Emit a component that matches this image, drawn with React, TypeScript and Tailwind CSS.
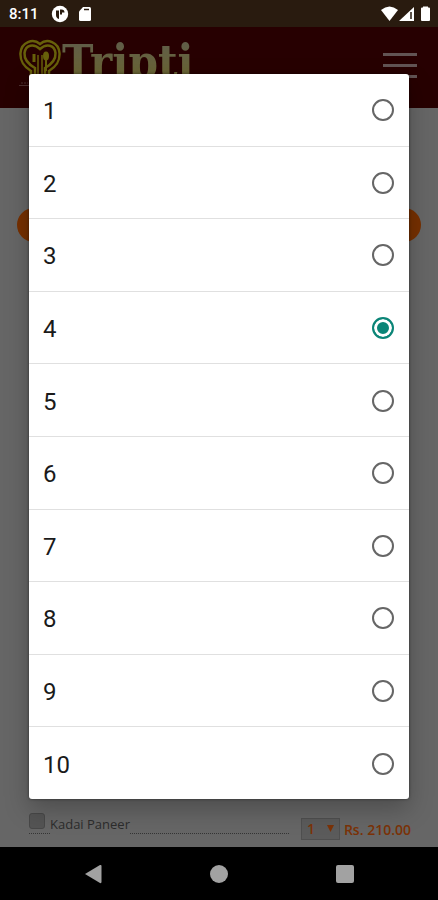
import React, { useState } from 'react';

const QUANTITIES = [1, 2, 3, 4, 5, 6, 7, 8, 9, 10];

const StatusBar: React.FC = () => (
  <div className="h-[27px] bg-[#291b0f] flex items-center justify-between pl-[9px] pr-[7px] text-white">
    <div className="flex items-center gap-3">
      <span className="text-[15px] leading-5 font-medium">8:11</span>
      <div className="flex items-center gap-[9px]">
        <svg width="18" height="18" viewBox="0 0 18 18">
          <circle cx="9" cy="9" r="8.200" fill="#fff" />
          <path d="M5 5.500h3v8.500q-3-1-3-4zM9 4.500h1.500q3 0 3 3H11v2H9z" fill="#291b0f" />
        </svg>
        <svg width="14" height="16" viewBox="0 0 14 16">
          <path d="M5 1h6.500a1.500 1.500 0 0 1 1.500 1.500v11a1.500 1.500 0 0 1-1.500 1.500h-9A1.500 1.500 0 0 1 1 13.500V5.500z" fill="#fff" />
          <path d="M6 3.500h5" stroke="#291b0f" strokeWidth="1.500" />
        </svg>
      </div>
    </div>
    <svg width="51" height="18" viewBox="0 0 51 18">
      <path d="M1 5Q9.500-2 18 5L9.500 16z" fill="#fff" />
      <path d="M34 2v14H19z" fill="#fff" />
      <path d="M31 7v7" stroke="#291b0f" strokeWidth="1.500" />
      <path d="M43 1.500h5v1h1q1 0 1 1V15q0 1-1 1h-7q-1 0-1-1V3.500q0-1 1-1h1z" fill="#fff" />
    </svg>
  </div>
);

const Logo: React.FC = () => (
  <div className="flex items-start">
    <div className="w-[43px]">
      <svg width="42" height="45" viewBox="0 0 42 45" fill="none" stroke="#67600a">
        <path d="M12 38v-6C4 27 1 22 1.500 14 2.500 3 14-1 21 5c7-6 18.500-2 19.500 9 .5 8-2.500 13-10.500 18v6" strokeWidth="2.500" />
        <path d="M16 38v-9C9 25 5 21 5.500 14c1-8 9-10 15.500-4 6.500-6 14.500-4 15.500 4 .5 7-3.500 11-10.500 15v9" strokeWidth="2.500" />
        <path d="M19 38V16M23 38V16" strokeWidth="1.500" />
        <path d="M15 15v8" strokeWidth="3" />
        <ellipse cx="27" cy="17" rx="3" ry="4.500" fill="#67600a" stroke="none" />
        <path d="M27 20v12" strokeWidth="2" />
        <path d="M2 44h7" stroke="#4a2c2c" strokeDasharray="2 1" />
      </svg>
      <div className="mt-px w-9 border-b border-[#4d3030]" />
    </div>
    <span className="font-['DejaVu_Serif_Condensed','DejaVu_Serif',serif] text-[47px] leading-[46px] font-bold bg-linear-to-b from-[#5f5c4a] to-[#6d672a] bg-clip-text text-transparent">
      Tripti
    </span>
  </div>
);

const Header: React.FC = () => (
  <header className="h-[81px] bg-[#270001] flex items-start justify-between pl-[19px] pr-[21px]">
    <div className="pt-3">
      <Logo />
    </div>
    <button aria-label="Menu" className="mt-[26px] flex flex-col gap-2">
      <span className="w-[34px] h-[3px] bg-[#625454]" />
      <span className="w-[34px] h-[3px] bg-[#625454]" />
      <span className="w-[34px] h-[3px] bg-[#625454]" />
    </button>
  </header>
);

const MenuItem: React.FC = () => (
  <div className="flex items-end pl-[29px] pr-[27px] pb-[7px] leading-5">
    <label className="flex flex-1 items-end pb-[6px]">
      <span className="w-[21px] border-b border-dotted border-[#353535]">
        <input type="checkbox" className="block appearance-none w-4 h-4 mb-1 rounded-[3px] bg-[#545454] border border-[#484848]" />
      </span>
      <span className="font-['Open_Sans',sans-serif] text-[13px] text-[#2c2c2c]">Kadai Paneer</span>
      <span className="flex-1 border-b border-dotted border-[#353535]" />
    </label>
    <div className="relative ml-3 mr-1">
      <select
        aria-label="Kadai Paneer quantity"
        className="block appearance-none w-[39px] h-[22px] pl-[5px] bg-[#5b5b5b] border border-[#4f4f4f] text-[14px] font-['Open_Sans',sans-serif] font-semibold text-[#7b3207]"
      >
        <option>1</option>
      </select>
      <svg className="absolute right-[6px] top-[7px] pointer-events-none" width="7" height="7" viewBox="0 0 7 7">
        <path d="M0 0h7L3.500 7z" fill="#7b3207" />
      </svg>
    </div>
    <span className="font-['Open_Sans',sans-serif] text-[14px] font-semibold text-[#7b3207]">Rs. 210.00</span>
  </div>
);

const NavBar: React.FC = () => (
  <nav className="h-[53px] bg-black flex items-center justify-center gap-[108px]">
    <button aria-label="Back">
      <svg width="18" height="20" viewBox="0 0 18 20">
        <path d="M1 10 16 1q1.500-.5 1.500 1v16q0 1.500-1.500 1z" fill="#a2a2a2" />
      </svg>
    </button>
    <button aria-label="Home" className="w-[18px] h-[18px] rounded-full bg-[#a2a2a2]" />
    <button aria-label="Recent apps" className="w-[18px] h-[18px] rounded-[2px] bg-[#a2a2a2]" />
  </nav>
);

const App: React.FC = () => {
  const [selected, setSelected] = useState(4);

  return (
    <div className="relative min-h-screen flex flex-col bg-[#666666] font-[Roboto,sans-serif]">
      <StatusBar />
      <Header />
      <main className="flex-1 flex flex-col justify-between">
        <div className="mt-[100px] mx-[17px] h-[34px] rounded-full bg-[#763000]" />
        <MenuItem />
      </main>
      <NavBar />

      <div className="absolute inset-0 px-[29px] pt-[74px] pb-[101px] flex">
        <div
          role="radiogroup"
          aria-label="Quantity"
          className="flex-1 flex flex-col bg-white rounded-[3px] overflow-hidden divide-y divide-[#e0e0e0] shadow-[0_10px_24px_rgba(0,0,0,0.25),0_0_3px_rgba(0,0,0,0.5)]"
        >
          {QUANTITIES.map(n => (
            <label key={n} className="flex-1 flex items-center justify-between pt-px pl-[14px] pr-[15px] text-2xl text-[#1a1a1a]">
              <span className="pt-[2px]">{n}</span>
              <input
                type="radio"
                name="quantity"
                value={n}
                checked={selected === n}
                onChange={() => setSelected(n)}
                className="appearance-none w-[22px] h-[22px] rounded-full border-2 border-[#666666] checked:border-[#0b8577] checked:bg-[#0b8577] checked:shadow-[inset_0_0_0_3px_white]"
              />
            </label>
          ))}
        </div>
      </div>
    </div>
  );
};

export default App;
